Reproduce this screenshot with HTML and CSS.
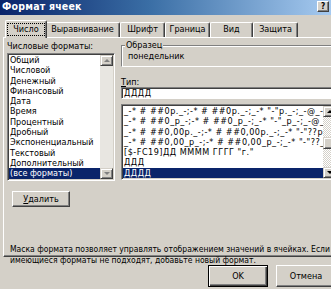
FILE: index.html
```html
<!DOCTYPE html>
<html lang="ru">
<head>
<meta charset="utf-8">
<title>Формат ячеек</title>
<link rel="stylesheet" href="styles.css">
</head>
<body>
<div class="window">
  <div class="titlebar">
    <span class="title">Формат ячеек</span>
    <span class="help">?</span>
  </div>
  <div class="tabs">
    <div class="tab active w-num"><span class="focus">Число</span></div>
    <div class="tab w-align">Выравнивание</div>
    <div class="tab w-font">Шрифт</div>
    <div class="tab w-border">Граница</div>
    <div class="tab w-view">Вид</div>
    <div class="tab w-prot">Защита</div>
  </div>
  <div class="panel">
    <div class="cols">
      <div class="left">
        <div class="label">Числовые форматы:</div>
        <div class="listbox cats">
          <div class="items">
            <div class="item">Общий</div>
            <div class="item">Числовой</div>
            <div class="item">Денежный</div>
            <div class="item">Финансовый</div>
            <div class="item">Дата</div>
            <div class="item">Время</div>
            <div class="item">Процентный</div>
            <div class="item">Дробный</div>
            <div class="item">Экспоненциальный</div>
            <div class="item">Текстовый</div>
            <div class="item">Дополнительный</div>
            <div class="item sel">(все форматы)</div>
          </div>
          <div class="vscroll">
            <div class="sbtn"><span class="arrow up dim"></span></div>
            <div class="track"></div>
            <div class="sbtn"><span class="arrow down dim"></span></div>
          </div>
        </div>
        <div class="btn del"><u>У</u>далить</div>
      </div>
      <div class="right">
        <div class="group">
          <span class="legend">Образец</span>
          <div class="sample">понедельник</div>
        </div>
        <div class="label type"><u>Т</u>ип:</div>
        <div class="input">ДДДД</div>
        <div class="listbox fmts">
          <div class="items">
            <div class="item">_-* # ##0р._-;-* # ##0р._-;_-* "-"р._-;_-@_-</div>
            <div class="item">_-* # ##0_р_-;-* # ##0_р_-;_-* "-"_р_-;_-@_-</div>
            <div class="item">_-* # ##0,00р._-;-* # ##0,00р._-;_-* "-"??р._-;_-@_-</div>
            <div class="item">_-* # ##0,00_р_-;-* # ##0,00_р_-;_-* "-"??_р_-;_-@_-</div>
            <div class="item">[$-FC19]ДД ММММ ГГГГ "г."</div>
            <div class="item">ДДД</div>
            <div class="item sel">ДДДД</div>
          </div>
          <div class="vscroll">
            <div class="sbtn"><span class="arrow up"></span></div>
            <div class="track"><div class="thumb"></div></div>
            <div class="sbtn"><span class="arrow down"></span></div>
          </div>
        </div>
      </div>
    </div>
    <p class="desc">Маска формата позволяет управлять отображением значений в ячейках. Если<br>имеющиеся форматы не подходят, добавьте новый формат.</p>
  </div>
  <div class="footer">
    <div class="btn ok">OK</div>
    <div class="btn cancel">Отмена</div>
  </div>
</div>
</body>
</html>
```

FILE: styles.css
```css
html, body {
  margin: 0;
  padding: 0;
}
body {
  width: 331px;
  height: 289px;
  overflow: hidden;
  background: #d4d0c8;
  font-family: "DejaVu Sans Condensed", "DejaVu Sans", "Liberation Sans", sans-serif;
  font-size: 9px;
  color: #000;
}
.window {
  width: 331px;
  height: 289px;
  display: flex;
  flex-direction: column;
}
.titlebar {
  height: 15px;
  flex: none;
  display: flex;
  align-items: flex-start;
  background: linear-gradient(to right, #0a246a 0%, #3a6ea5 45%, #a6caf0 100%);
  padding-left: 2px;
  box-sizing: border-box;
}
.title {
  color: #fff;
  font-weight: bold;
  font-size: 10.5px;
  line-height: 12px;
  letter-spacing: 0.2px;
}
.help {
  margin-left: auto;
  margin-right: 2px;
  margin-top: 1px;
  width: 12px;
  height: 11px;
  box-sizing: border-box;
  background: #d4d0c8;
  border: 1px solid;
  border-color: #fff #404040 #404040 #fff;
  box-shadow: inset -1px -1px #808080;
  font-weight: bold;
  font-size: 8px;
  line-height: 9px;
  text-align: center;
}
.tabs {
  flex: none;
  height: 17px;
  margin-top: 5px;
  padding-left: 7px;
  display: flex;
  align-items: flex-end;
  position: relative;
  z-index: 1;
}
.tab {
  height: 15px;
  box-sizing: border-box;
  border: 1px solid;
  border-bottom: none;
  border-color: #fff #404040 #404040 #fff;
  box-shadow: inset -1px 0 #808080;
  border-radius: 2px 2px 0 0;
  text-align: center;
  line-height: 13px;
  background: #d4d0c8;
}
.w-num { width: 38px; }
.w-align { width: 75px; }
.w-font { width: 45px; }
.w-border { width: 45px; }
.w-view { width: 43px; }
.w-prot { width: 45px; }
.tab.active {
  height: 18px;
  margin: 0 -2px -1px -2px;
  width: 42px;
  position: relative;
  z-index: 2;
  padding-top: 2px;
}
.focus {
  display: inline-block;
  outline: 1px dotted #000;
  outline-offset: 0;
  width: 36px;
  line-height: 11px;
}
.panel {
  flex: none;
  height: 220px;
  margin-left: 3px;
  margin-right: -12px;
  box-sizing: border-box;
  border: 1px solid;
  border-color: #fff #404040 #404040 #fff;
  box-shadow: inset -1px -1px #808080;
  padding: 3px 0 0 3px;
}
.cols {
  display: flex;
  gap: 6px;
}
.left {
  width: 108px;
  display: flex;
  flex-direction: column;
}
.label {
  height: 12px;
  line-height: 10px;
}
.listbox {
  display: flex;
  box-sizing: border-box;
  border: 1px solid;
  border-color: #808080 #fff #fff #808080;
  box-shadow: inset 1px 1px #404040, inset -1px -1px #d4d0c8;
  padding: 1px;
  background: #fff;
  overflow: hidden;
}
.items {
  flex: 1;
  min-width: 0;
  overflow: hidden;
}
.item {
  height: 10.3px;
  line-height: 10.3px;
  padding-left: 1px;
  white-space: nowrap;
}
.item.sel {
  background: #0a246a;
  color: #fff;
}
.cats {
  height: 128px;
}
.fmts {
  height: 76px;
  margin-top: 5px;
}
.fmts .item {
  letter-spacing: 0.5px;
}
.vscroll {
  width: 13px;
  flex: none;
  display: flex;
  flex-direction: column;
}
.sbtn {
  height: 11px;
  flex: none;
  box-sizing: border-box;
  background: #d4d0c8;
  border: 1px solid;
  border-color: #d4d0c8 #404040 #404040 #d4d0c8;
  box-shadow: inset 1px 1px #fff, inset -1px -1px #808080;
  display: flex;
  align-items: center;
  justify-content: center;
}
.track {
  flex: 1;
  background-color: #ece9e4;
  background-image: repeating-conic-gradient(#fff 0 25%, #d4d0c8 0 50%);
  background-size: 2px 2px;
  position: relative;
}
.cats .track {
  background: #e8e6e1;
}
.thumb {
  position: absolute;
  left: 0;
  right: 0;
  top: 20px;
  height: 12px;
  box-sizing: border-box;
  background: #d4d0c8;
  border: 1px solid;
  border-color: #d4d0c8 #404040 #404040 #d4d0c8;
  box-shadow: inset 1px 1px #fff, inset -1px -1px #808080;
}
.arrow {
  width: 0;
  height: 0;
  border-left: 3px solid transparent;
  border-right: 3px solid transparent;
}
.arrow.up {
  border-bottom: 3px solid #000;
}
.arrow.down {
  border-top: 3px solid #000;
}
.arrow.up.dim {
  border-bottom-color: #808080;
}
.arrow.down.dim {
  border-top-color: #808080;
}
.btn {
  box-sizing: border-box;
  background: #d4d0c8;
  border: 1px solid;
  border-color: #fff #404040 #404040 #fff;
  box-shadow: inset -1px -1px #808080;
  text-align: center;
}
.btn u {
  text-decoration: underline;
}
.del {
  width: 58px;
  height: 16px;
  line-height: 14px;
  margin-top: 10px;
  margin-left: 5px;
}
.right {
  width: 217px;
  display: flex;
  flex-direction: column;
}
.group {
  position: relative;
  margin-top: 4px;
  height: 22px;
  box-sizing: border-box;
  border: 1px solid;
  border-color: #808080 transparent #fff #808080;
  box-shadow: inset 1px 1px #fff;
  padding: 5px 0 0 6px;
}
.legend {
  position: absolute;
  top: -6px;
  left: 3px;
  background: #d4d0c8;
  padding: 0 1px;
  line-height: 10px;
}
.sample {
  line-height: 10px;
}
.label.type {
  margin-top: 10px;
  height: 10px;
}
.input {
  height: 12px;
  box-sizing: border-box;
  border: 1px solid;
  border-color: #808080 #fff #fff #808080;
  box-shadow: inset 1px 1px #404040;
  background: #fff;
  padding-left: 2px;
  line-height: 11px;
  letter-spacing: 0.6px;
}
.desc {
  margin: 37px 0 0 3px;
  width: 326px;
  font-size: 8.5px;
  line-height: 11px;
  white-space: nowrap;
}
.footer {
  flex: none;
  margin-top: 8px;
  margin-right: -5px;
  display: flex;
  justify-content: flex-end;
  gap: 8px;
}
.footer .btn {
  width: 60px;
  height: 22px;
  line-height: 20px;
}
.ok {
  border-color: #000;
  box-shadow: inset 1px 1px #fff, inset -1px -1px #404040, inset -2px -2px #808080;
}
```
